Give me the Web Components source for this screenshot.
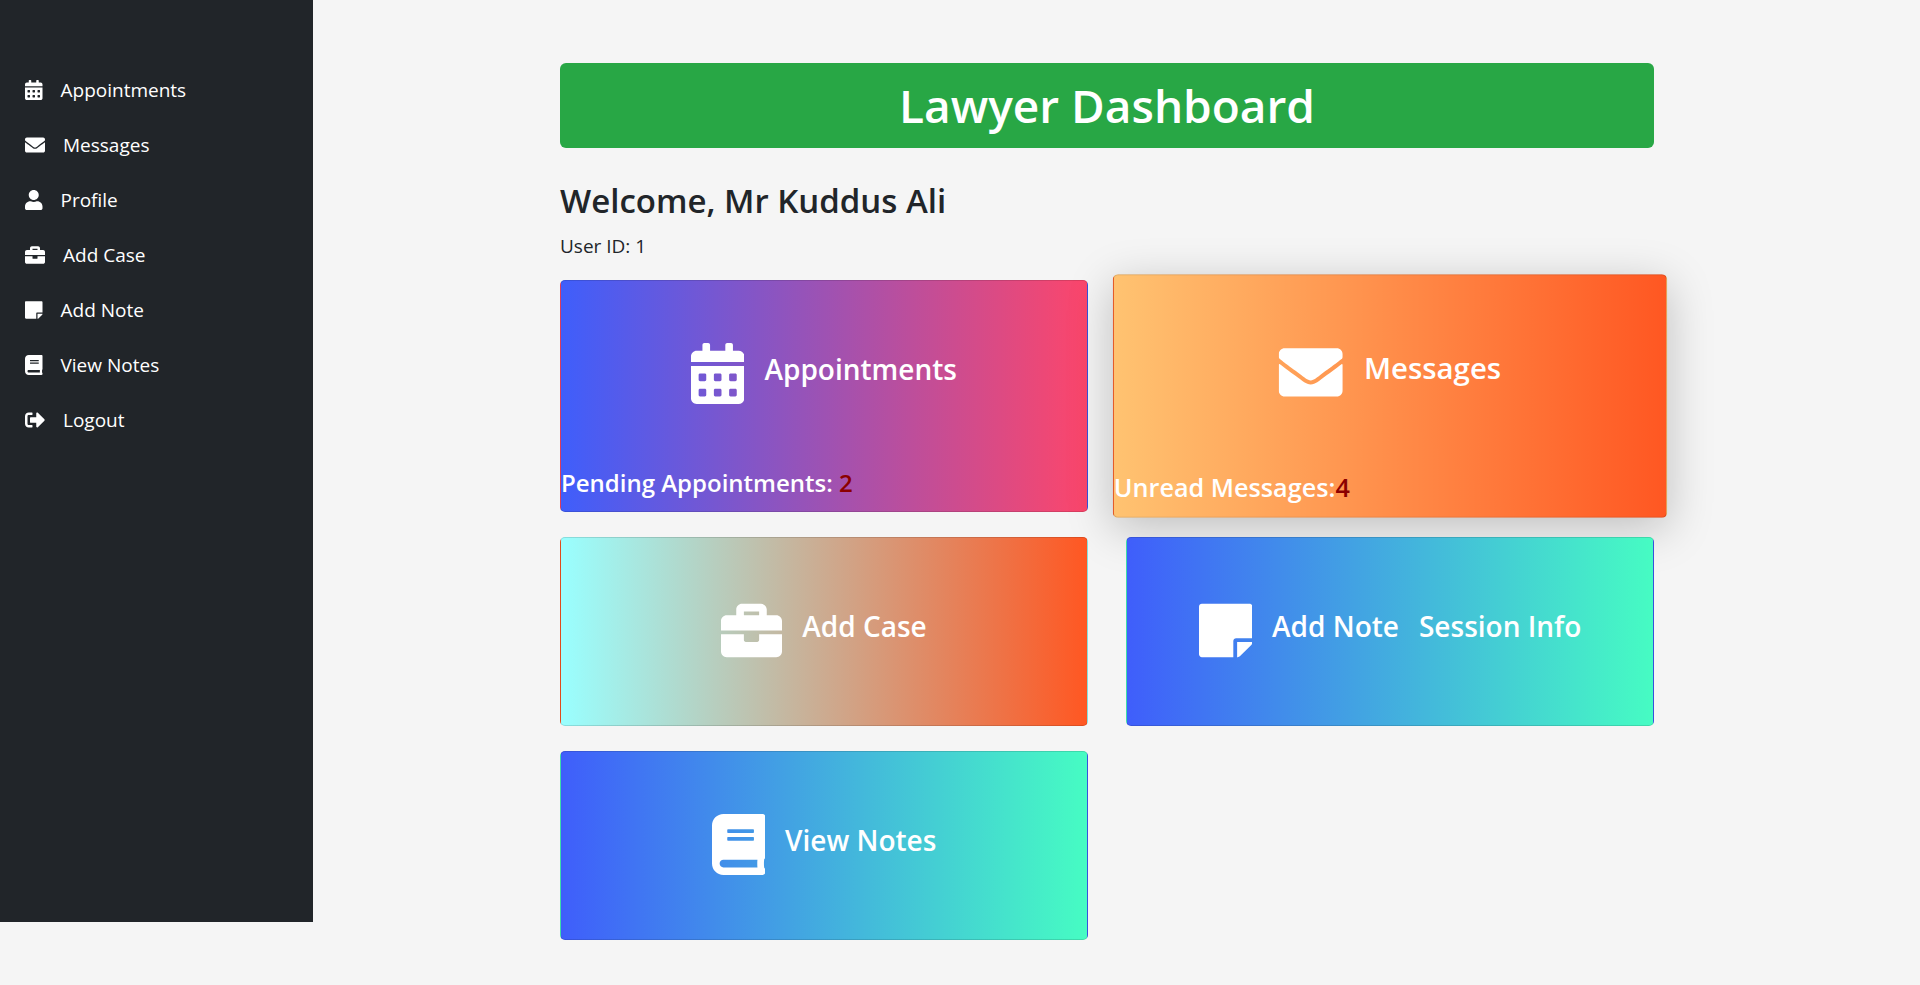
<!DOCTYPE html>
<html lang="en">
<head>
<meta charset="utf-8">
<meta name="viewport" content="width=device-width, initial-scale=1">
<title>Lawyer Dashboard</title>
<style>
  body {
    margin: 0;
    background: #f5f5f5;
    color: #212529;
    font-family: "Segoe UI", "Open Sans", "Noto Sans", sans-serif;
    font-size: 19px;
    line-height: 30px;
  }
</style>
</head>
<body>
<lawyer-app></lawyer-app>

<script>
const ICONS = {
  calendar: [448, 'M0 464c0 26.500 21.500 48 48 48h352c26.500 0 48-21.500 48-48V192H0v272zm320-196c0-6.600 5.400-12 12-12h40c6.600 0 12 5.400 12 12v40c0 6.600-5.400 12-12 12h-40c-6.600 0-12-5.400-12-12v-40zm0 128c0-6.600 5.400-12 12-12h40c6.600 0 12 5.400 12 12v40c0 6.600-5.400 12-12 12h-40c-6.600 0-12-5.400-12-12v-40zM192 268c0-6.600 5.400-12 12-12h40c6.600 0 12 5.400 12 12v40c0 6.600-5.400 12-12 12h-40c-6.600 0-12-5.400-12-12v-40zm0 128c0-6.600 5.400-12 12-12h40c6.600 0 12 5.400 12 12v40c0 6.600-5.400 12-12 12h-40c-6.600 0-12-5.400-12-12v-40zM64 268c0-6.600 5.400-12 12-12h40c6.600 0 12 5.400 12 12v40c0 6.600-5.400 12-12 12H76c-6.600 0-12-5.400-12-12v-40zm0 128c0-6.600 5.400-12 12-12h40c6.600 0 12 5.400 12 12v40c0 6.600-5.400 12-12 12H76c-6.600 0-12-5.400-12-12v-40zM400 64h-48V16c0-8.800-7.200-16-16-16h-32c-8.800 0-16 7.200-16 16v48H160V16c0-8.800-7.200-16-16-16h-32c-8.800 0-16 7.200-16 16v48H48C21.500 64 0 85.500 0 112v48h448v-48c0-26.500-21.500-48-48-48z'],
  envelope: [512, 'M502.300 190.800c3.900-3.100 9.700-.2 9.700 4.700V400c0 26.500-21.500 48-48 48H48c-26.500 0-48-21.500-48-48V195.600c0-5 5.700-7.800 9.700-4.700 22.400 17.400 52.100 39.500 154.100 113.600 21.100 15.400 56.700 47.800 92.200 47.600 35.700.3 72-32.800 92.300-47.600 102-74.100 131.600-96.300 154-113.700zM256 320c23.200.4 56.600-29.200 73.400-41.400 132.700-96.300 142.800-104.700 173.400-128.700 5.800-4.500 9.200-11.500 9.200-18.900v-19c0-26.500-21.500-48-48-48H48c-26.500 0-48 21.500-48 48v19c0 7.400 3.400 14.300 9.200 18.900 30.600 23.900 40.700 32.400 173.400 128.700 16.800 12.200 50.200 41.800 73.400 41.400z'],
  user: [448, 'M224 256c70.700 0 128-57.300 128-128S294.700 0 224 0 96 57.300 96 128s57.300 128 128 128zm89.600 32h-16.700c-22.200 10.200-46.900 16-72.900 16s-50.600-5.800-72.900-16h-16.700C60.200 288 0 348.200 0 422.400V464c0 26.500 21.500 48 48 48h352c26.500 0 48-21.500 48-48v-41.600c0-74.200-60.200-134.400-134.400-134.400z'],
  briefcase: [512, 'M320 336c0 8.840-7.160 16-16 16h-96c-8.840 0-16-7.160-16-16v-48H0v144c0 25.600 22.400 48 48 48h416c25.600 0 48-22.400 48-48V288H320v48zm144-208h-80V80c0-25.600-22.400-48-48-48H176c-25.600 0-48 22.400-48 48v48H48c-25.600 0-48 22.400-48 48v80h512v-80c0-25.600-22.400-48-48-48zm-144 0H192V96h128v32z'],
  note: [448, 'M312 320h136V56c0-13.300-10.700-24-24-24H24C10.700 32 0 42.700 0 56v400c0 13.300 10.700 24 24 24h264V344c0-13.200 10.800-24 24-24zm129 55l-98 98c-4.500 4.500-10.600 7-17 7h-6V352h128v6.100c0 6.300-2.500 12.400-7 16.900z'],
  book: [448, 'M448 360V24c0-13.300-10.700-24-24-24H96C43 0 0 43 0 96v320c0 53 43 96 96 96h328c13.300 0 24-10.700 24-24v-16c0-7.500-3.500-14.300-8.900-18.700-4.200-15.400-4.200-59.300 0-74.700 5.400-4.300 8.900-11.100 8.900-18.600zM128 134c0-3.300 2.700-6 6-6h212c3.300 0 6 2.700 6 6v20c0 3.300-2.700 6-6 6H134c-3.300 0-6-2.700-6-6v-20zm0 64c0-3.300 2.700-6 6-6h212c3.300 0 6 2.700 6 6v20c0 3.300-2.700 6-6 6H134c-3.300 0-6-2.700-6-6v-20zm253.400 250H96c-17.700 0-32-14.300-32-32 0-17.600 14.400-32 32-32h285.400c-1.900 17.100-1.900 46.900 0 64z'],
  logout: [512, 'M497 273L329 441c-15 15-41 4.500-41-17v-96H152c-13.300 0-24-10.700-24-24v-96c0-13.300 10.700-24 24-24h136V88c0-21.400 25.900-32 41-17l168 168c9.300 9.400 9.300 24.600 0 34zM192 436v-40c0-6.600-5.400-12-12-12H96c-17.700 0-32-14.300-32-32V160c0-17.700 14.300-32 32-32h84c6.600 0 12-5.400 12-12V76c0-6.600-5.400-12-12-12H96c-53 0-96 43-96 96v192c0 53 43 96 96 96h84c6.600 0 12-5.400 12-12z']
};

function define(name, html, update) {
  const template = document.createElement('template');
  template.innerHTML = html;
  customElements.define(name, class extends HTMLElement {
    static observedAttributes = ['name', 'icon', 'href', 'count'];
    constructor() {
      super();
      this.attachShadow({ mode: 'open' }).append(template.content.cloneNode(true));
    }
    attributeChangedCallback() {
      if (update) update(this, this.shadowRoot);
    }
  });
}

define('app-icon', `
  <style>
    :host { display: block; flex: none; height: var(--icon-size, 20px); }
    svg { display: block; height: 100%; fill: currentColor; }
  </style>
  <svg aria-hidden="true"><path></path></svg>`,
  (host, root) => {
    const icon = ICONS[host.getAttribute('name')];
    if (!icon) return;
    root.querySelector('svg').setAttribute('viewBox', `0 0 ${icon[0]} 512`);
    root.querySelector('path').setAttribute('d', icon[1]);
  });

define('nav-item', `
  <style>
    :host { display: block; }
    a {
      display: flex;
      align-items: center;
      gap: 18px;
      padding: 12px 25px 13px;
      color: #fff;
      text-decoration: none;
    }
    a:hover { background: #343a40; }
  </style>
  <a href="#"><app-icon></app-icon><span><slot></slot></span></a>`,
  (host, root) => {
    root.querySelector('app-icon').setAttribute('name', host.getAttribute('icon'));
    root.querySelector('a').setAttribute('href', host.getAttribute('href'));
  });

define('side-bar', `
  <style>
    :host {
      display: block;
      box-sizing: border-box;
      flex: none;
      width: 313px;
      height: calc(100vh - 63px);
      padding-top: 63px;
      background: #212529;
    }
  </style>
  <nav aria-label="Main"><slot></slot></nav>`);

define('page-banner', `
  <style>
    :host { display: block; background: #28a745; border-radius: 6px; color: #fff; }
    h1 { margin: 0; padding: 12px; font-size: 46px; line-height: 61px; font-weight: 600; text-align: center; }
  </style>
  <h1><slot></slot></h1>`);

define('dash-card', `
  <style>
    :host {
      display: block;
      position: relative;
      border: 1px solid rgba(0, 0, 0, .125);
      border-radius: 5px;
      background: linear-gradient(to right, var(--from), var(--to));
      color: #fff;
      font-weight: 600;
    }
    :host([active]) { transform: scale(1.05); box-shadow: 0 10px 44px rgba(0, 0, 0, .22); }
    a {
      --icon-size: 61px;
      display: flex;
      align-items: center;
      justify-content: center;
      gap: 20px;
      padding: 62px 20px 64px;
      color: inherit;
      text-decoration: none;
    }
    h3 { display: flex; gap: 20px; margin: 0 0 10px; font-size: 28px; line-height: 36px; font-weight: 600; }
    ::slotted([slot="status"]) { display: block; margin-bottom: 13px; font-size: 24px; line-height: 30px; }
  </style>
  <a href="#"><app-icon></app-icon><h3><slot></slot></h3></a>
  <slot name="status"></slot>`,
  (host, root) => {
    root.querySelector('app-icon').setAttribute('name', host.getAttribute('icon'));
    root.querySelector('a').setAttribute('href', host.getAttribute('href'));
  });

define('status-line', `
  <style>
    b { color: #8b0000; font-weight: 600; }
  </style>
  <slot></slot><b></b>`,
  (host, root) => { root.querySelector('b').textContent = host.getAttribute('count'); });

define('lawyer-app', `
  <style>
    :host { display: flex; align-items: flex-start; }
    main { flex: 1; min-width: 0; padding: 63px 266px 43px 247px; }
    h2 { margin: 30px 0 8px; font-size: 33px; line-height: 45px; font-weight: 600; }
    p { margin: 0 0 19px; }
    .cards { display: grid; grid-template-columns: repeat(2, minmax(0, 1fr)); gap: 25px 38px; align-items: start; }
    .appointments { --from: #3f5efb; --to: #fc466b; }
    .messages { --from: #ffc371; --to: #ff5722; }
    .case { --from: #99ffff; --to: #ff5722; }
    .notes { --from: #3f5efb; --to: #46fcc3; }
  </style>
  <side-bar>
    <nav-item icon="calendar" href="#appointments">Appointments</nav-item>
    <nav-item icon="envelope" href="#messages">Messages</nav-item>
    <nav-item icon="user" href="#profile">Profile</nav-item>
    <nav-item icon="briefcase" href="#add-case">Add Case</nav-item>
    <nav-item icon="note" href="#add-note">Add Note</nav-item>
    <nav-item icon="book" href="#view-notes">View Notes</nav-item>
    <nav-item icon="logout" href="#logout">Logout</nav-item>
  </side-bar>
  <main>
    <page-banner>Lawyer Dashboard</page-banner>
    <h2>Welcome, Mr Kuddus Ali</h2>
    <p>User ID: 1</p>
    <div class="cards">
      <dash-card class="appointments" icon="calendar" href="#appointments">Appointments<status-line slot="status" count="2">Pending Appointments: </status-line></dash-card>
      <dash-card class="messages" icon="envelope" href="#messages" active>Messages<status-line slot="status" count="4">Unread Messages:</status-line></dash-card>
      <dash-card class="case" icon="briefcase" href="#add-case">Add Case</dash-card>
      <dash-card class="notes" icon="note" href="#add-note"><span>Add Note</span><span>Session Info</span></dash-card>
      <dash-card class="notes" icon="book" href="#view-notes">View Notes</dash-card>
    </div>
  </main>`);
</script>
</body>
</html>
